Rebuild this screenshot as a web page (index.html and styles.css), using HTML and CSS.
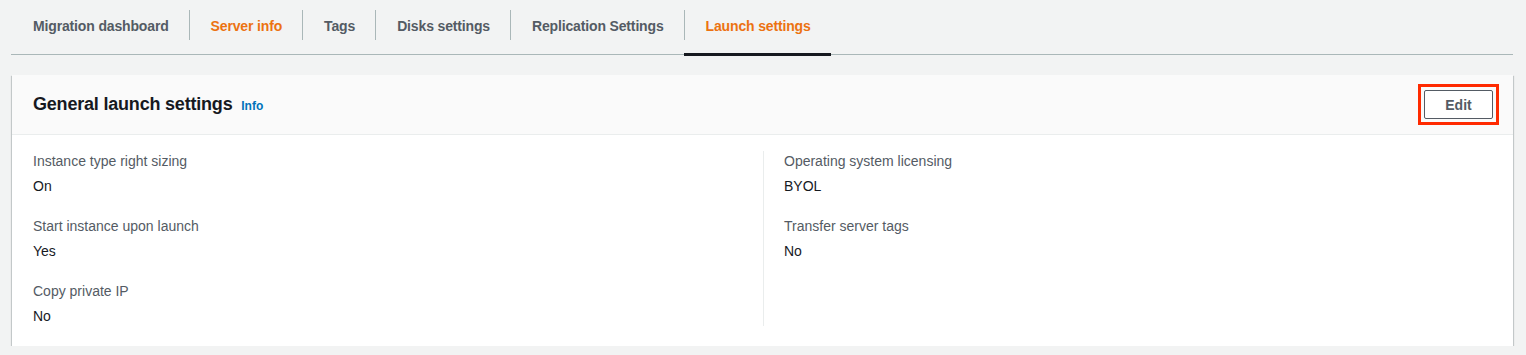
FILE: index.html
```html
<!DOCTYPE html>
<html lang="en">

<head>
  <meta charset="UTF-8">
  <meta name="viewport" content="width=device-width, initial-scale=1.0">
  <title>Launch settings</title>
  <link rel="stylesheet" href="styles.css">
</head>

<body>

  <div class="page">
    <ul class="tabs">
      <li class="tab"><span class="tab-label first">Migration dashboard</span></li>
      <li class="tab"><span class="tab-label link">Server info</span></li>
      <li class="tab"><span class="tab-label">Tags</span></li>
      <li class="tab"><span class="tab-label">Disks settings</span></li>
      <li class="tab"><span class="tab-label">Replication Settings</span></li>
      <li class="tab active"><span class="tab-label link">Launch settings</span></li>
    </ul>

    <div class="card">
      <div class="card-header">
        <h2>General launch settings <a class="info" href="#">Info</a></h2>
        <span class="highlight"><button type="button">Edit</button></span>
      </div>

      <div class="card-body">
        <div class="column">
          <div class="kv">
            <div class="kv-label">Instance type right sizing</div>
            <div class="kv-value">On</div>
          </div>
          <div class="kv">
            <div class="kv-label">Start instance upon launch</div>
            <div class="kv-value">Yes</div>
          </div>
          <div class="kv">
            <div class="kv-label">Copy private IP</div>
            <div class="kv-value">No</div>
          </div>
        </div>

        <div class="column divided">
          <div class="kv">
            <div class="kv-label">Operating system licensing</div>
            <div class="kv-value">BYOL</div>
          </div>
          <div class="kv">
            <div class="kv-label">Transfer server tags</div>
            <div class="kv-value">No</div>
          </div>
        </div>
      </div>
    </div>
  </div>

</body>

</html>
```

FILE: styles.css
```css
body {
  font-family: "Liberation Sans", Arial, sans-serif;
  font-size: 14px;
  margin: 0;
  padding: 0;
  background-color: #f2f3f3;
  color: #16191f;
}

.page {
  padding: 0 13px 0 11px;
}

/* Вкладки */
.tabs {
  display: flex;
  list-style: none;
  margin: 0;
  padding: 0;
  border-bottom: 1px solid #aab7b8;
}

.tab {
  padding: 10px 0 14px;
  margin-bottom: -1px;
  border-bottom: 1px solid transparent;
}

.tab.active {
  padding-bottom: 11px;
  border-bottom: 3px solid #16191f;
  margin-bottom: -2px;
}

.tab-label {
  display: block;
  height: 30px;
  line-height: 32px;
  padding: 0 20px 0 21px;
  border-left: 1px solid #aab7b8;
  font-weight: bold;
  letter-spacing: -0.15px;
  color: #545b64;
}

.tab-label.first {
  border-left-color: transparent;
}

.tab-label.link {
  color: #ec7211;
}

/* Карточка */
.card {
  margin-top: 20px;
  margin-left: 1px;
  background-color: white;
  box-shadow: 0 1px 1px 0 rgba(0, 28, 36, 0.3), 1px 1px 1px 0 rgba(0, 28, 36, 0.15), -1px 1px 1px 0 rgba(0, 28, 36, 0.15);
}

.card-header {
  display: flex;
  align-items: center;
  justify-content: space-between;
  padding: 15px 20px 15px 21px;
  background-color: #fafafa;
  border-bottom: 1px solid #eaeded;
}

.card-header h2 {
  margin: 0;
  font-size: 18px;
  line-height: 24px;
  padding-top: 1px;
  font-weight: bold;
  letter-spacing: -0.2px;
  color: #16191f;
}

.info {
  margin-left: 4px;
  font-size: 12px;
  font-weight: bold;
  letter-spacing: 0;
  color: #0073bb;
  text-decoration: none;
}

.highlight {
  display: block;
  outline: 3px solid #ff2a00;
  outline-offset: 3px;
}

.highlight button {
  display: block;
  height: 29px;
  width: 69px;
  padding: 0;
  background-color: white;
  border: 1px solid #545b64;
  border-radius: 2px;
  font-family: inherit;
  font-size: 14px;
  font-weight: bold;
  color: #545b64;
  cursor: pointer;
}

.card-body {
  display: grid;
  grid-template-columns: 1fr 1fr;
  padding: 16px 20px 20px 21px;
}

.column.divided {
  border-left: 1px solid #eaeded;
  padding-left: 20px;
}

.kv {
  margin-bottom: 20px;
}

.kv:last-child {
  margin-bottom: 0;
}

.kv-label {
  line-height: 20px;
  margin-bottom: 5px;
  color: #545b64;
}

.kv-value {
  line-height: 20px;
}
```
